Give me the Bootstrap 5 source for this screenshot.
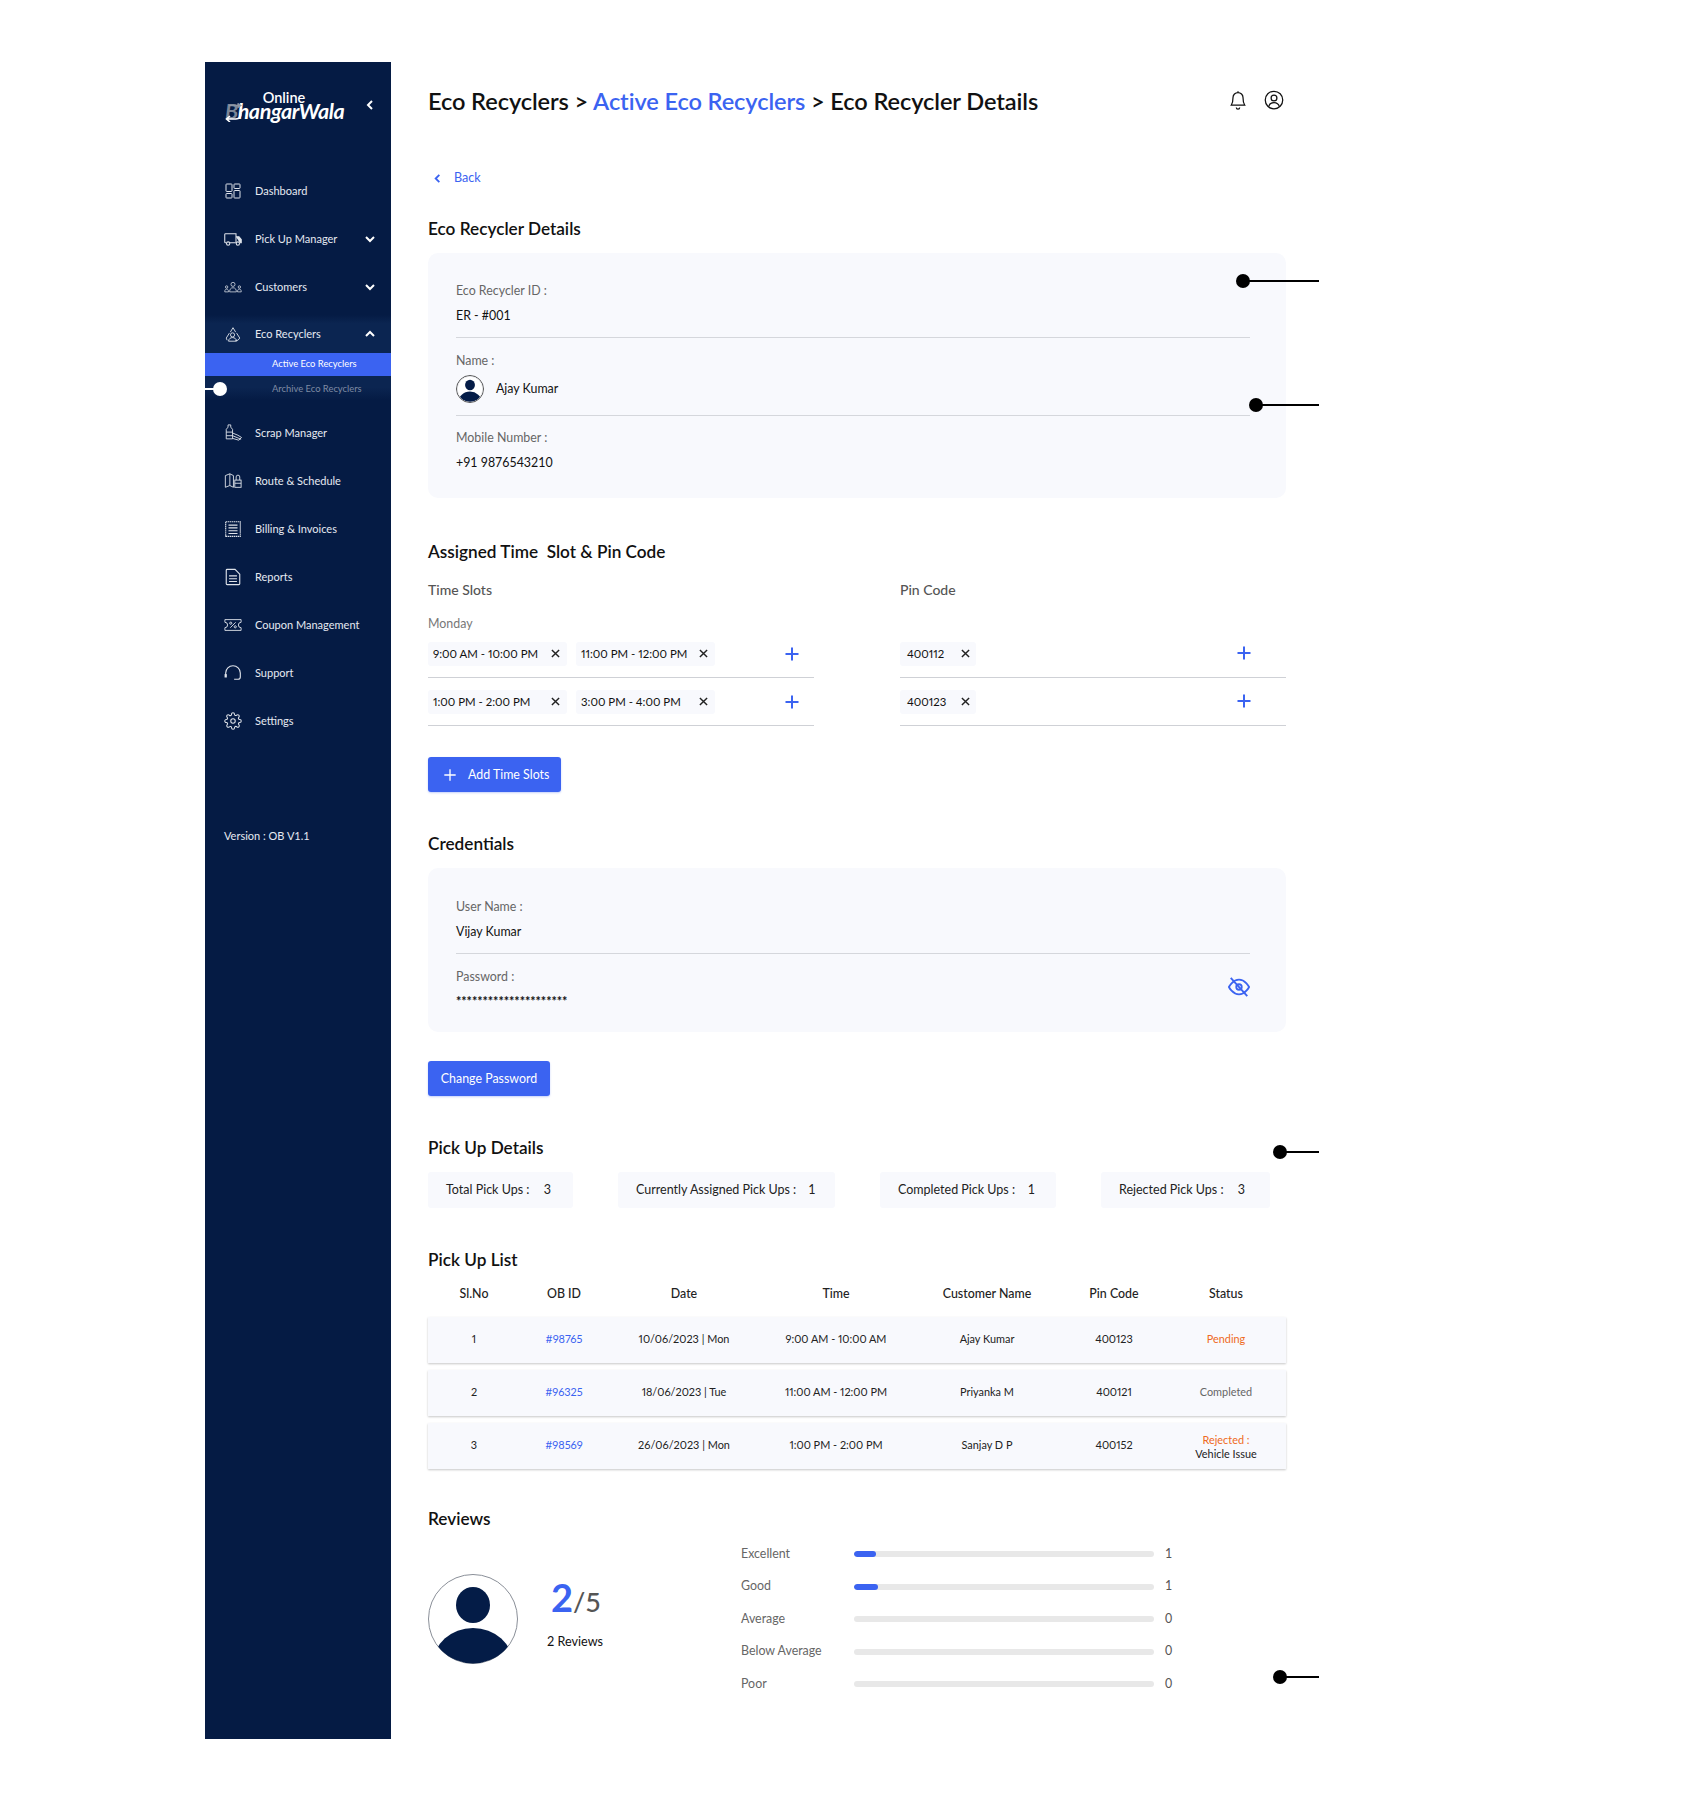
<!DOCTYPE html>
<html lang="en">
  <head>
    <meta charset="UTF-8" />
    <meta name="viewport" content="width=device-width, initial-scale=1.0" />
    <title>Eco Recycler Details</title>
    <link
      href="https://cdn.jsdelivr.net/npm/bootstrap@5.3.0/dist/css/bootstrap.min.css"
      rel="stylesheet"
    />
    <style>
      body { font-family: Lato, "Open Sans", sans-serif; background: #fff; color: #111; }
      .page-wrap { position: relative; width: 1690px; height: 1800px; padding: 62px 0 0 205px; display: flex; }

      /* sidebar */
      .side-bar { width: 186px; height: 1677px; background: #051b44; color: #e6eaf2; flex: none; }
      .logo-row { height: 105px; padding: 0 15px 16px 20px; display: flex; justify-content: space-between; align-items: center; }
      .logo-text { color: #fff; line-height: 1; text-align: center; width: 118px; position: relative; }
      .logo-top { font-size: 14.5px; font-weight: 600; display: block; margin-bottom: -4px; }
      .logo-main { font-size: 21.5px; font-weight: 700; font-style: italic; letter-spacing: -.4px; display: block; white-space: nowrap; }
      .logo-first { color: #7d8798; }
      .logo-arrow { position: absolute; left: -1px; bottom: 1px; width: 19px; height: 19px; fill: none; stroke-width: 1.6; }
      .logo-chev { margin-bottom: 3px; }
      .side-item { height: 48px; display: flex; align-items: center; padding: 0 15px 0 19px; font-size: 11px; color: #e6eaf2; text-decoration: none; }
      .side-item svg.ico { width: 18px; height: 18px; margin-right: 13px; flex: none; fill: none; stroke: #dfe3ea; stroke-width: 1; }
      .side-item svg.ico-strong { stroke-width: 1.4; }
      .side-item .chev { margin-left: auto; width: 12px; height: 12px; fill: none; stroke: #fff; stroke-width: 2; }
      .side-group { background: linear-gradient(#051b44, #0b2551 10%, #0b2551 85%, #051b44); }
      .side-open { height: 38px; margin-top: 4px; }
      .sub-active { height: 23px; line-height: 22px; background: #3b63f1; color: #fff; font-size: 9.4px; padding-left: 67px; }
      .sub-plain { height: 24px; line-height: 25px; color: #7f8ba3; font-size: 9.4px; padding-left: 67px; margin-bottom: 9px; }
      .side-version { margin: 82px 0 0 19px; font-size: 11px; line-height: 18px; color: #e6eaf2; }

      /* main */
      .main-col { width: 858px; margin-left: 37px; flex: none; }
      .top-title { height: 30px; margin: 24px 0 0; display: flex; justify-content: space-between; align-items: center; }
      .crumb { font-size: 23.6px; line-height: 30px; font-weight: 600; margin: 0; letter-spacing: -.1px; }
      .crumb a { color: #3b63f1; text-decoration: none; }
      .top-icons { display: flex; gap: 16px; align-items: center; margin: -3px 2px 0 0; }
      .top-icons svg { width: 20px; height: 20px; fill: none; stroke: #111; stroke-width: 1.5; }
      .back-link { display: flex; align-items: center; height: 20px; margin-top: 52px; color: #3b63f1; font-size: 12.6px; text-decoration: none; padding-left: 4px; }
      .back-link svg { width: 11px; height: 11px; fill: none; stroke: #3b63f1; stroke-width: 2; margin-right: 11px; }
      .sect-head { font-size: 17.2px; line-height: 22px; font-weight: 600; margin: 0; color: #111; }
      .mt-30 { margin-top: 30px; }
      .mt-43 { margin-top: 43px; }
      .mt-41 { margin-top: 41px; }
      .mt-32 { margin-top: 32px; }
      .info-box { background: #f8f9fd; border-radius: 10px; padding: 29px 36px 26px 28px; margin-top: 13px; }
      .cred-box { margin-top: 13px; padding-top: 30px; padding-bottom: 21px; position: relative; }
      .fld-label { font-size: 12.4px; line-height: 18px; color: #666; }
      .fld-value { font-size: 12.4px; line-height: 18px; color: #111; margin-top: 7px; }
      .fld-line { border-bottom: 1px solid #d5d7dc; padding-bottom: 12px; margin-bottom: 14px; }
      .fld-name { padding-bottom: 12px; margin-bottom: 13px; }
      .ava-row { display: flex; align-items: center; gap: 12px; margin-top: 5px; font-size: 12.4px; }
      .ava-pic { display: block; width: 28px; height: 28px; border: 1px solid #555; border-radius: 50%; }
      .dots-val { letter-spacing: -.05px; margin-top: 7px; font-size: 12.6px; line-height: 18px; font-weight: 700; }
      .eye-ico { position: absolute; right: 36px; top: 108px; width: 22px; height: 22px; fill: none; stroke: #3b63f1; stroke-width: 2; }

      .slot-grid { display: flex; justify-content: space-between; }
      .slot-col { width: 386px; }
      .slot-title { font-size: 14px; line-height: 20px; color: #555; font-weight: 500; margin-top: 17px; }
      .slot-day { font-size: 12.4px; line-height: 18px; color: #777; margin-top: 15px; }
      .slot-row { height: 44px; padding-bottom: 4px; border-bottom: 1px solid #cfd1d6; display: flex; align-items: center; gap: 9px; margin-top: 4px; }
      .slot-first { margin-top: 1px; }
      .pin-first { margin-top: 34px; }
      .slot-chip { width: 139px; height: 24px; background: #f8f9fd; border-radius: 3px; font-size: 11.4px; font-variant-numeric: proportional-nums; display: flex; align-items: center; justify-content: space-between; padding: 0 7px 0 5px; }
      .pin-chip { width: 76px; padding: 0 6px 0 7px; }
      .chip-x { width: 9px; height: 9px; stroke: #222; stroke-width: 1.6; fill: none; flex: none; }
      .add-plus { width: 16px; height: 16px; stroke: #3b63f1; stroke-width: 2; fill: none; margin-left: auto; margin-right: 14px; flex: none; }
      .pin-plus { margin-right: 34px; margin-top: -1px; }
      .act-btn { height: 35px; background: #3b63f1; border: 0; color: #fff; font-size: 12.4px; border-radius: 3px; padding: 1px 12px 0; display: inline-flex; align-items: center; box-shadow: 0 1px 2px rgba(59, 99, 241, .3); }
      .act-btn:hover { background: #3b63f1; color: #fff; }
      .act-btn svg { width: 14px; height: 14px; stroke: #fff; stroke-width: 1.5; fill: none; margin-right: 11px; margin-left: 3px; }
      .pw-btn { width: 122px; justify-content: center; padding: 1px 0 0; }
      .mt-31 { margin-top: 31px; }
      .mt-29b { margin-top: 29px; }

      .stat-row { display: flex; gap: 45px; margin-top: 13px; }
      .stat-box { height: 36px; background: #f8f9fd; border-radius: 3px; padding: 1px 18px 0; font-size: 12.5px; display: flex; align-items: center; justify-content: space-between; color: #222; }
      .stat-a { width: 145px; }
      .stat-b { width: 217px; }
      .stat-c { width: 176px; }
      .stat-d { width: 169px; }
      .stat-a span:last-child { margin-right: 4px; }
      .stat-b span:last-child { margin-right: 1.5px; }
      .stat-c span:last-child { margin-right: 3px; }
      .stat-d span:last-child { margin-right: 7px; }

      .pick-table { width: 858px; table-layout: fixed; border-collapse: separate; border-spacing: 0 7px; margin: 6px 0 0; font-variant-numeric: proportional-nums; }
      .pick-table th, .pick-table td { padding: 0; border: 0; text-align: center; background: transparent; }
      .pick-table th { height: 26px; font-size: 12.4px; line-height: 20px; font-weight: 500; vertical-align: top; color: #222; }
      .pick-table tbody tr { height: 46px; background: #f8f9fd; box-shadow: 0 1px 2px rgba(0, 0, 0, .22); }
      .pick-table td { font-size: 10.9px; line-height: 14px; vertical-align: middle; color: #222; padding-bottom: 3px; }
      .pick-table td.st-two { padding: 2px 0 0; }
      .pick-table th:nth-child(1) { width: 92px; }
      .pick-table th:nth-child(2) { width: 88px; }
      .pick-table th:nth-child(3), .pick-table th:nth-child(4) { width: 152px; }
      .pick-table th:nth-child(5) { width: 150px; }
      .pick-table th:nth-child(6) { width: 104px; }
      .pick-table th:nth-child(7) { width: 120px; }
      .ob-link { color: #3b63f1; text-decoration: none; }
      .st-orange { color: #ef6a22; display: block; }
      .st-grey { color: #666; }

      .review-wrap { display: flex; margin-top: 15px; }
      .review-left { width: 313px; display: flex; padding-top: 29px; flex: none; }
      .review-ava { width: 90px; height: 90px; margin-right: 29px; flex: none; }
      .score-num { font-size: 38px; line-height: 44px; font-weight: 700; color: #3b63f1; margin-left: 4px; margin-top: 1px; }
      .score-num span { font-size: 27px; font-weight: 500; color: #555; }
      .score-sub { font-size: 12.6px; line-height: 18px; margin-top: 9px; }
      .bar-row { display: flex; align-items: center; height: 18px; margin-bottom: 14.5px; font-size: 12.4px; color: #666; }
      .bar-name { width: 113px; }
      .progress.bar-track { width: 300px; height: 6px; background: #e8e8e8; border-radius: 3px; }
      .bar-track .progress-bar { background: #3b63f1; border-radius: 3px; }
      .bar-count { margin-left: 11px; color: #555; }

      /* callout markers laid over the screen */
      .mark-dot { position: absolute; width: 14px; height: 14px; border-radius: 50%; background: #000; }
      .mark-dot::after { content: ""; position: absolute; left: 10px; top: 6px; height: 2px; background: #000; width: var(--len); }
      .mark-a { left: 1236px; top: 274px; --len: 73px; }
      .mark-b { left: 1249px; top: 398px; --len: 60px; }
      .mark-c { left: 1273px; top: 1145px; --len: 36px; }
      .mark-d { left: 1273px; top: 1670px; --len: 36px; }
      .mark-side { position: absolute; left: 213px; top: 382px; width: 14px; height: 14px; border-radius: 50%; background: #fff; }
      .mark-side::before { content: ""; position: absolute; left: -8px; top: 6px; width: 10px; height: 2px; background: #fff; }
    </style>
  </head>
  <body>
    <svg width="0" height="0" class="d-block">
      <symbol id="x-mark" viewBox="0 0 10 10"><path d="M1 1l8 8M9 1l-8 8" /></symbol>
      <symbol id="plus-mark" viewBox="0 0 16 16"><path d="M8 1.5v13M1.5 8h13" /></symbol>
      <symbol id="chev-down" viewBox="0 0 12 12"><path d="M2 4l4 4 4-4" /></symbol>
      <symbol id="user-pic" viewBox="0 0 90 90">
        <defs><clipPath id="round-clip"><circle cx="45" cy="45" r="44.5" /></clipPath></defs>
        <circle cx="45" cy="45" r="44.5" fill="#fff" stroke="#8a8f98" stroke-width="1" />
        <g clip-path="url(#round-clip)" fill="#041c47">
          <ellipse cx="45" cy="31" rx="17" ry="18" />
          <ellipse cx="45" cy="90" rx="40" ry="36" />
        </g>
      </symbol>
    </svg>

    <div class="page-wrap">
      <aside class="side-bar">
        <div class="logo-row">
          <div class="logo-text">
            <span class="logo-top">Online</span>
            <span class="logo-main"><span class="logo-first">B</span>hangarWala</span>
            <svg class="logo-arrow" viewBox="0 0 19 19"><path d="M5 2.500h11M13.500 .5l3 2-3 2" stroke="#8d96a6" /><path d="M17 10c0 4-1.500 6-5 6H3M6 13l-3.500 3L6 19" stroke="#fff" /></svg>
          </div>
          <svg class="logo-chev" width="12" height="12" viewBox="0 0 12 12" fill="none" stroke="#fff" stroke-width="2"><path d="M8 2L4 6l4 4" /></svg>
        </div>

        <a class="side-item" href="#">
          <svg class="ico" viewBox="-1 -1 18 18"><rect x="1" y="1" width="6" height="7.5" rx=".6" /><rect x="9" y="1" width="6" height="4.5" rx=".6" /><rect x="1" y="10.500" width="6" height="4.500" rx=".6" /><rect x="9" y="7.500" width="6" height="7.500" rx=".6" /></svg>
          Dashboard
        </a>
        <a class="side-item" href="#">
          <svg class="ico ico-strong" viewBox="0 0 24 24"><path d="M16 16V5H2a1 1 0 0 0-1 1v10a1 1 0 0 0 1 1h1M8 17h8" /><path d="M16 9h4l3 3.500V17h-2M16 17h.5" fill="#dfe3ea" /><circle cx="5.500" cy="18" r="2.200" /><circle cx="18.500" cy="18" r="2.200" /></svg>
          Pick Up Manager
          <svg class="chev"><use href="#chev-down" /></svg>
        </a>
        <a class="side-item" href="#">
          <svg class="ico" viewBox="0 0 24 16"><circle cx="12" cy="4.500" r="2.700" /><path d="M7.500 14.500c0-3.500 1.500-5.500 4.500-5.500s4.500 2 4.500 5.500z" /><circle cx="3.500" cy="8" r="1.600" /><path d="M1 14.500c0-2.500.8-3.700 2.500-3.700 1.700 0 2.500 1.200 2.500 3.700z" /><circle cx="20.500" cy="8" r="1.600" /><path d="M23 14.500c0-2.500-.8-3.700-2.500-3.700-1.700 0-2.500 1.200-2.500 3.700z" /></svg>
          Customers
          <svg class="chev"><use href="#chev-down" /></svg>
        </a>
        <div class="side-group">
          <a class="side-item side-open" href="#">
            <svg class="ico" viewBox="0 0 20 20"><path d="M7 8l3-5 3 5M14 9l3.500 5.500-2 2.500h-3M6 9l-3.500 5.500 1 2.500" /><circle cx="9.500" cy="11" r="2.300" /><path d="M5 18c.5-3 2.300-4 4.500-4s4 1 4.500 4z" /></svg>
            Eco Recyclers
            <svg class="chev" viewBox="0 0 12 12"><path d="M2 8l4-4 4 4" /></svg>
          </a>
          <div class="sub-active">Active Eco Recyclers</div>
          <div class="sub-plain">Archive Eco Recyclers</div>
        </div>
        <a class="side-item" href="#">
          <svg class="ico" viewBox="0 0 20 20"><path d="M4.500 1h3v2.500L9.500 6v10.500h-7V6l2-2.500zM2.500 9h7M2.500 13h7" /><path d="M9.500 10l6 2.500 4 2.500-3 3-7-2M9.500 13l6 2.500 3.500 1.500" /></svg>
          Scrap Manager
        </a>
        <a class="side-item" href="#">
          <svg class="ico" viewBox="0 0 20 20"><path d="M1.500 4l5-2 4 2v13l-4-2-5 2zM6.500 2v13" /><rect x="12" y="9" width="7" height="8" /><path d="M13.500 9V5.500a2 2 0 0 1 4 0V9M12 12.500h7" /></svg>
          Route &amp; Schedule
        </a>
        <a class="side-item" href="#">
          <svg class="ico" viewBox="0 0 16 16"><rect x="1.500" y="1.500" width="13" height="13" stroke-dasharray="1.300 .5" /><path d="M4 4.500h8M4 7h8M4 9.500h8M4 12h8" /></svg>
          Billing &amp; Invoices
        </a>
        <a class="side-item" href="#">
          <svg class="ico" viewBox="0 0 16 16"><path d="M2 2a.8.8 0 0 1 .8-.8h7L14 5.500v8.500a.8.8 0 0 1-.8.8H2.800A.8.8 0 0 1 2 14zM4.500 7h7M4.500 9.500h7M4.500 12h7" /></svg>
          Reports
        </a>
        <a class="side-item" href="#">
          <svg class="ico" viewBox="0 0 20 16"><path d="M1 2h18v3a3 3 0 0 0 0 6v3H1v-3a3 3 0 0 0 0-6z" /><path d="M7 11l6-6" /><circle cx="7.500" cy="6" r="1.200" /><circle cx="12.500" cy="10" r="1.200" /></svg>
          Coupon Management
        </a>
        <a class="side-item" href="#">
          <svg class="ico" viewBox="0 0 16 16"><path d="M1.500 11V8a6.500 6.500 0 0 1 13 0v3.500c0 1-.8 2-2 2H9" /><path d="M1.500 9v3" stroke-width="2" /></svg>
          Support
        </a>
        <a class="side-item" href="#">
          <svg class="ico ico-strong" viewBox="0 0 24 24"><circle cx="12" cy="12" r="3" /><path d="M19.400 15a1.650 1.650 0 0 0 .33 1.820l.06.06a2 2 0 0 1 0 2.830 2 2 0 0 1-2.830 0l-.06-.06a1.650 1.650 0 0 0-1.820-.33 1.650 1.650 0 0 0-1 1.510V21a2 2 0 0 1-2 2 2 2 0 0 1-2-2v-.09A1.650 1.650 0 0 0 9 19.400a1.650 1.650 0 0 0-1.820.33l-.06.06a2 2 0 0 1-2.830 0 2 2 0 0 1 0-2.830l.06-.06a1.650 1.650 0 0 0 .33-1.820 1.650 1.650 0 0 0-1.510-1H3a2 2 0 0 1-2-2 2 2 0 0 1 2-2h.09A1.650 1.650 0 0 0 4.600 9a1.650 1.650 0 0 0-.33-1.820l-.06-.06a2 2 0 0 1 0-2.830 2 2 0 0 1 2.830 0l.06.06a1.650 1.650 0 0 0 1.820.33H9a1.650 1.650 0 0 0 1-1.510V3a2 2 0 0 1 2-2 2 2 0 0 1 2 2v.09a1.650 1.650 0 0 0 1 1.510 1.650 1.650 0 0 0 1.820-.33l.06-.06a2 2 0 0 1 2.830 0 2 2 0 0 1 0 2.830l-.06.06a1.650 1.650 0 0 0-.33 1.820V9a1.650 1.650 0 0 0 1.510 1H21a2 2 0 0 1 2 2 2 2 0 0 1-2 2h-.09a1.650 1.650 0 0 0-1.510 1z" /></svg>
          Settings
        </a>
        <div class="side-version">Version : OB V1.1</div>
      </aside>

      <main class="main-col">
        <div class="top-title">
          <h1 class="crumb">Eco Recyclers &gt; <a href="#">Active Eco Recyclers</a> &gt; Eco Recycler Details</h1>
          <div class="top-icons">
            <svg viewBox="0 0 24 24"><path d="M18 9A6 6 0 0 0 6 9c0 6-1 7.500-2 9h16c-1-1.500-2-3-2-9M12 3V1.500M14 21a2 2 0 0 1-4 0" /></svg>
            <svg viewBox="0 0 24 24"><circle cx="12" cy="12" r="10.500" /><circle cx="12" cy="9.500" r="3.500" /><path d="M5.500 20c1-3.500 3.500-5 6.500-5s5.500 1.500 6.500 5" /></svg>
          </div>
        </div>

        <a class="back-link" href="#"><svg viewBox="0 0 12 12"><path d="M8 2L4 6l4 4" /></svg>Back</a>

        <h2 class="sect-head mt-30">Eco Recycler Details</h2>
        <div class="info-box">
          <div class="fld-line">
            <div class="fld-label">Eco Recycler ID :</div>
            <div class="fld-value">ER - #001</div>
          </div>
          <div class="fld-line fld-name">
            <div class="fld-label">Name :</div>
            <div class="ava-row"><svg class="ava-pic"><use href="#user-pic" /></svg>Ajay Kumar</div>
          </div>
          <div class="fld-label">Mobile Number :</div>
          <div class="fld-value">+91 9876543210</div>
        </div>

        <h2 class="sect-head mt-43">Assigned Time&nbsp; Slot &amp; Pin Code</h2>
        <div class="slot-grid">
          <div class="slot-col">
            <div class="slot-title">Time Slots</div>
            <div class="slot-day">Monday</div>
            <div class="slot-row slot-first">
              <div class="slot-chip">9:00 AM - 10:00 PM <svg class="chip-x"><use href="#x-mark" /></svg></div>
              <div class="slot-chip">11:00 PM - 12:00 PM <svg class="chip-x"><use href="#x-mark" /></svg></div>
              <svg class="add-plus"><use href="#plus-mark" /></svg>
            </div>
            <div class="slot-row">
              <div class="slot-chip">1:00 PM - 2:00 PM <svg class="chip-x"><use href="#x-mark" /></svg></div>
              <div class="slot-chip">3:00 PM - 4:00 PM <svg class="chip-x"><use href="#x-mark" /></svg></div>
              <svg class="add-plus"><use href="#plus-mark" /></svg>
            </div>
          </div>
          <div class="slot-col">
            <div class="slot-title">Pin Code</div>
            <div class="slot-row pin-first">
              <div class="slot-chip pin-chip">400112 <svg class="chip-x"><use href="#x-mark" /></svg></div>
              <svg class="add-plus pin-plus"><use href="#plus-mark" /></svg>
            </div>
            <div class="slot-row">
              <div class="slot-chip pin-chip">400123 <svg class="chip-x"><use href="#x-mark" /></svg></div>
              <svg class="add-plus pin-plus"><use href="#plus-mark" /></svg>
            </div>
          </div>
        </div>
        <button type="button" class="btn act-btn mt-31"><svg><use href="#plus-mark" /></svg>Add Time Slots</button>

        <h2 class="sect-head mt-41">Credentials</h2>
        <div class="info-box cred-box">
          <div class="fld-line">
            <div class="fld-label">User Name :</div>
            <div class="fld-value">Vijay Kumar</div>
          </div>
          <div class="fld-label">Password :</div>
          <div class="dots-val">*********************</div>
          <svg class="eye-ico" viewBox="0 0 24 24"><path d="M1 12s4-8 11-8 11 8 11 8-4 8-11 8-11-8-11-8z" /><circle cx="12" cy="12" r="3" /><path d="M3 2l18 20" /></svg>
        </div>
        <button type="button" class="btn act-btn pw-btn mt-29b">Change Password</button>

        <h2 class="sect-head mt-41">Pick Up Details</h2>
        <div class="stat-row">
          <div class="stat-box stat-a"><span>Total Pick Ups :</span><span>3</span></div>
          <div class="stat-box stat-b"><span>Currently Assigned Pick Ups :</span><span>1</span></div>
          <div class="stat-box stat-c"><span>Completed Pick Ups :</span><span>1</span></div>
          <div class="stat-box stat-d"><span>Rejected Pick Ups :</span><span>3</span></div>
        </div>

        <h2 class="sect-head mt-41">Pick Up List</h2>
        <table class="table pick-table">
          <thead>
            <tr><th>Sl.No</th><th>OB ID</th><th>Date</th><th>Time</th><th>Customer Name</th><th>Pin Code</th><th>Status</th></tr>
          </thead>
          <tbody>
            <tr><td>1</td><td><a class="ob-link" href="#">#98765</a></td><td>10/06/2023 | Mon</td><td>9:00 AM - 10:00 AM</td><td>Ajay Kumar</td><td>400123</td><td><span class="st-orange">Pending</span></td></tr>
            <tr><td>2</td><td><a class="ob-link" href="#">#96325</a></td><td>18/06/2023 | Tue</td><td>11:00 AM - 12:00 PM</td><td>Priyanka M</td><td>400121</td><td><span class="st-grey">Completed</span></td></tr>
            <tr><td>3</td><td><a class="ob-link" href="#">#98569</a></td><td>26/06/2023 | Mon</td><td>1:00 PM - 2:00 PM</td><td>Sanjay D P</td><td>400152</td><td class="st-two"><span class="st-orange">Rejected :</span>Vehicle Issue</td></tr>
          </tbody>
        </table>

        <h2 class="sect-head mt-32">Reviews</h2>
        <div class="review-wrap">
          <div class="review-left">
            <svg class="review-ava"><use href="#user-pic" /></svg>
            <div>
              <div class="score-num">2<span>/5</span></div>
              <div class="score-sub">2 Reviews</div>
            </div>
          </div>
          <div>
            <div class="bar-row"><div class="bar-name">Excellent</div><div class="progress bar-track"><div class="progress-bar" style="width: 7.3%"></div></div><div class="bar-count">1</div></div>
            <div class="bar-row"><div class="bar-name">Good</div><div class="progress bar-track"><div class="progress-bar" style="width: 8%"></div></div><div class="bar-count">1</div></div>
            <div class="bar-row"><div class="bar-name">Average</div><div class="progress bar-track"><div class="progress-bar" style="width: 0%"></div></div><div class="bar-count">0</div></div>
            <div class="bar-row"><div class="bar-name">Below Average</div><div class="progress bar-track"><div class="progress-bar" style="width: 0%"></div></div><div class="bar-count">0</div></div>
            <div class="bar-row"><div class="bar-name">Poor</div><div class="progress bar-track"><div class="progress-bar" style="width: 0%"></div></div><div class="bar-count">0</div></div>
          </div>
        </div>
      </main>

      <span class="mark-dot mark-a"></span>
      <span class="mark-dot mark-b"></span>
      <span class="mark-dot mark-c"></span>
      <span class="mark-dot mark-d"></span>
      <span class="mark-side"></span>
    </div>

    <script src="https://cdn.jsdelivr.net/npm/bootstrap@5.3.0/dist/js/bootstrap.bundle.min.js"></script>
  </body>
</html>
